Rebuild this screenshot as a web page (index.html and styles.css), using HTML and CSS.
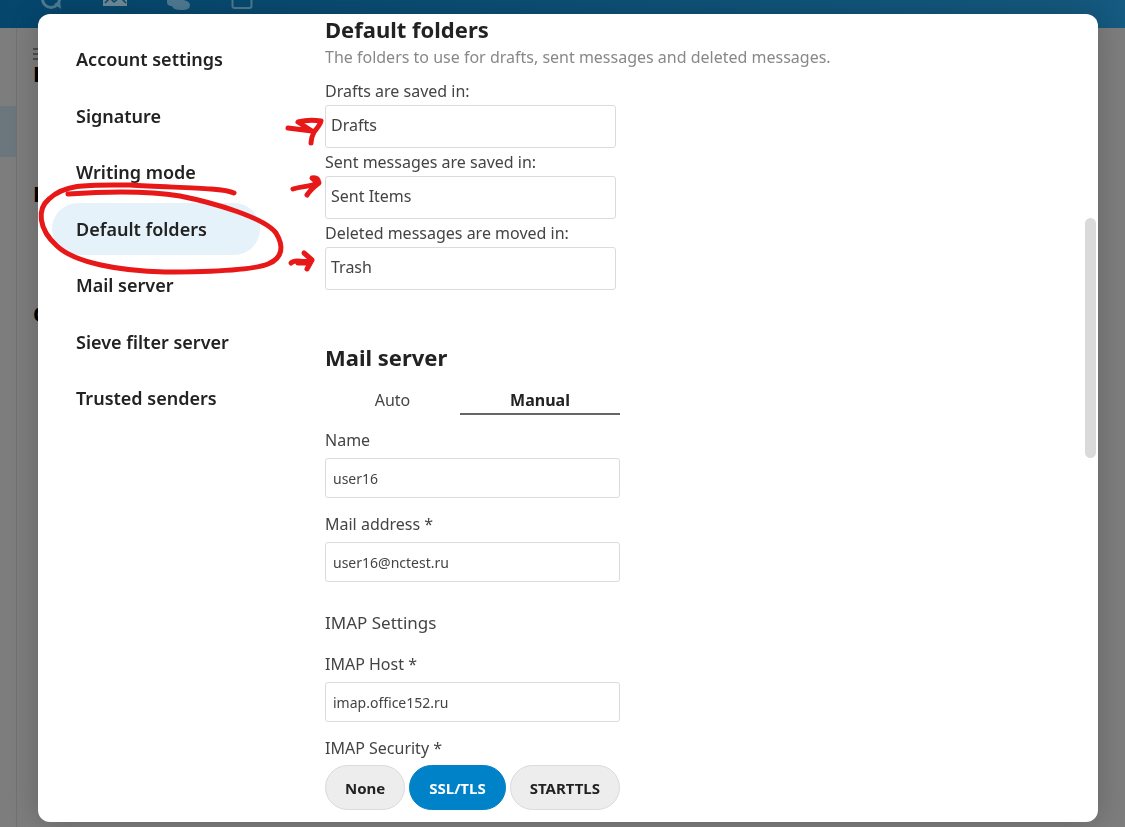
FILE: index.html
```
<!DOCTYPE html>
<html lang="en">
<head>
  <meta charset="UTF-8">
  <meta name="viewport" content="width=device-width, initial-scale=1.0">
  <title>Account settings</title>
  <link rel="stylesheet" href="styles.css">
</head>
<body>
  <header class="topbar">
    <svg class="topbar-icons" width="300" height="28" viewBox="0 0 300 28" aria-hidden="true">
      <circle cx="51" cy="-1" r="8.5" fill="none" stroke="#4f7b92" stroke-width="3"/>
      <path d="M54 4l7 5-1-8z" fill="#4f7b92"/>
      <path d="M103 -4h24v10h-24z" fill="#6f8b98"/>
      <path d="M105 3l5-5 4 4 6-5 6 6" fill="none" stroke="#07496e" stroke-width="1.5"/>
      <path d="M167 -4h14v4c5 0 9 2 9 5 0 4-3 5-8 5-6 0-9-1-10-4-4 0-5-2-5-4z" fill="#4f7b92"/>
      <rect x="232.5" y="-8" width="19" height="16" rx="2" fill="none" stroke="#4f7b92" stroke-width="2"/>
    </svg>
  </header>
  <div class="app">
    <aside class="app-list">
      <div class="app-list-selected"></div>
    </aside>
    <div class="app-content">
      <svg width="20" height="14" viewBox="0 0 20 14" aria-hidden="true">
        <path d="M0 1h20M0 6h20M0 11h20" stroke="#3c3c3c" stroke-width="1.5"/>
      </svg>
      <b class="app-heading">D</b>
      <b class="app-heading">D</b>
      <b class="app-heading">C</b>
    </div>
  </div>

  <div class="overlay">
    <div class="modal" role="dialog" aria-label="Account settings">
      <nav class="settings-nav">
        <a href="#account">Account settings</a>
        <a href="#signature">Signature</a>
        <a href="#writing">Writing mode</a>
        <a href="#folders" class="active">Default folders</a>
        <a href="#server">Mail server</a>
        <a href="#sieve">Sieve filter server</a>
        <a href="#senders">Trusted senders</a>
      </nav>

      <main class="settings">
        <section class="folders" id="folders">
          <h2>Default folders</h2>
          <p class="hint">The folders to use for drafts, sent messages and deleted messages.</p>
          <label for="drafts">Drafts are saved in:</label>
          <input type="text" id="drafts" value="Drafts">
          <label for="sent">Sent messages are saved in:</label>
          <input type="text" id="sent" value="Sent Items">
          <label for="trash">Deleted messages are moved in:</label>
          <input type="text" id="trash" value="Trash">
        </section>

        <section class="server" id="server">
          <h2>Mail server</h2>
          <div class="tabs" role="tablist">
            <button type="button" role="tab" aria-selected="false">Auto</button>
            <button type="button" role="tab" aria-selected="true">Manual</button>
          </div>
          <div class="field">
            <label for="name">Name</label>
            <input type="text" id="name" value="user16">
          </div>
          <div class="field">
            <label for="email">Mail address *</label>
            <input type="email" id="email" value="user16@nctest.ru">
          </div>
          <h3>IMAP Settings</h3>
          <div class="field">
            <label for="host">IMAP Host *</label>
            <input type="text" id="host" value="imap.office152.ru">
          </div>
          <fieldset>
            <legend>IMAP Security *</legend>
            <div class="choices">
              <input type="radio" name="security" id="sec-none">
              <label for="sec-none">None</label>
              <input type="radio" name="security" id="sec-ssl" checked>
              <label for="sec-ssl">SSL/TLS</label>
              <input type="radio" name="security" id="sec-starttls">
              <label for="sec-starttls">STARTTLS</label>
            </div>
          </fieldset>
        </section>
      </main>
      <div class="scroll-thumb"></div>
    </div>
  </div>

  <!-- red pen marks -->
  <svg class="marks" width="340" height="300" viewBox="0 0 340 300" aria-hidden="true">
    <path d="M68 194C110 191 150 191 180 196C215 203 265 218 276 233C284 246 283 258 268 264C250 271 200 272 165 272C120 271 75 263 57 246C38 229 37 209 49 199C66 183 90 185 130 185C170 188 222 187 234 193"/>
    <path d="M288 128L312 131L298 122Q309 119 321 121Q320 125 314 132Q311 138 311 143"/>
    <path d="M293 189C302 186 310 187 318 183L312 178Q318 177 319 183Q311 189 307 195"/>
    <path d="M291 263C296 258 303 264 312 260L304 253L312 260L307 269M298 263L310 263"/>
  </svg>
</body>
</html>
```
FILE: styles.css
```
* {
  box-sizing: border-box;
}
body {
  margin: 0;
  min-height: 100vh;
  display: flex;
  flex-direction: column;
  overflow: hidden;
  background: #7d7d7d;
  color: #444;
  font-family: "Segoe UI", "Noto Sans", sans-serif;
  font-size: 16px;
}
h2, h3, p {
  margin: 0;
}

/* page behind the dialog */
.topbar {
  height: 28px;
  background: linear-gradient(90deg, #05466d, #155a80);
}
.topbar-icons {
  display: block;
}
.app {
  flex: 1;
  display: flex;
}
.app-list {
  width: 17px;
  padding-top: 78px;
  border-right: 1px solid #727272;
}
.app-list-selected {
  height: 51px;
  background: #6c777d;
}
.app-content {
  display: flex;
  flex-direction: column;
  padding: 20px 16px;
}
.app-heading {
  height: 120px;
  color: #000;
  font-size: 22px;
  line-height: 22px;
}

/* dialog */
.overlay {
  position: fixed;
  inset: 0;
  display: flex;
  padding: 14px 27px 5px 38px;
}
.modal {
  position: relative;
  flex: 1;
  display: flex;
  overflow: hidden;
  background: #fff;
  border-radius: 12px;
  box-shadow: 0 0 30px rgba(0, 0, 0, 0.2);
}
.settings-nav {
  width: 222px;
  height: 410px;
  flex-shrink: 0;
  display: flex;
  flex-direction: column;
  justify-content: space-between;
  padding: 19px 0 0 14px;
}
.settings-nav a {
  height: 52px;
  padding-left: 24px;
  border-radius: 26px;
  color: #222;
  font-size: 18px;
  font-weight: 600;
  line-height: 52px;
  text-decoration: none;
}
.settings-nav .active {
  background: #e5f2fa;
}
.settings {
  flex: 1;
  padding-left: 65px;
}
h2 {
  color: #222;
  font-size: 22px;
  line-height: 31px;
}
.hint {
  margin-bottom: 8px;
  color: #888;
  line-height: 24px;
}
label, legend {
  display: block;
  padding: 0;
  line-height: 28px;
}
input {
  display: block;
  background: #fff;
  border: 1px solid #dbdbdb;
  border-radius: 3px;
  color: #444;
  font-family: inherit;
}
.folders input {
  width: 291px;
  height: 43px;
  padding: 0 5px 3px;
  font-size: 16px;
}
.server {
  width: 295px;
  margin-top: 52px;
}
.tabs {
  display: grid;
  grid-template-columns: 135px 1fr;
  margin: 13px 0 11px;
}
.tabs button {
  height: 29px;
  padding: 0;
  background: none;
  border: 0;
  border-bottom: 2px solid transparent;
  color: #444;
  font: inherit;
}
.tabs [aria-selected="true"] {
  border-color: #666;
  color: #222;
  font-weight: bold;
}
.field {
  margin-bottom: 12px;
}
.field input {
  width: 100%;
  height: 40px;
  margin-top: 4px;
  padding: 0 7px;
  font-size: 14px;
}
h3 {
  margin: 27px 0 13px;
  font-size: 17px;
  font-weight: normal;
  line-height: 28px;
}
fieldset {
  margin: 0;
  padding: 0;
  border: 0;
}
.choices {
  display: flex;
  gap: 4px;
  margin-top: 3px;
}
.choices input {
  position: absolute;
  opacity: 0;
}
.choices label {
  flex: 1 0 auto;
  height: 45px;
  padding: 0 18px;
  background: #ededed;
  border: 1px solid #dbdbdb;
  border-radius: 23px;
  color: #222;
  font-size: 15px;
  font-weight: bold;
  line-height: 45px;
  text-align: center;
}
.choices input:checked + label {
  background: #0082c9;
  border-color: #0082c9;
  color: #fff;
}
.scroll-thumb {
  position: absolute;
  top: 204px;
  right: 2px;
  width: 11px;
  height: 240px;
  background: #dadada;
  border-radius: 6px;
}
.marks {
  position: absolute;
  top: 0;
  left: 0;
  fill: none;
  stroke: #e81818;
  stroke-width: 5;
  stroke-linecap: round;
  stroke-linejoin: round;
  pointer-events: none;
}
```
